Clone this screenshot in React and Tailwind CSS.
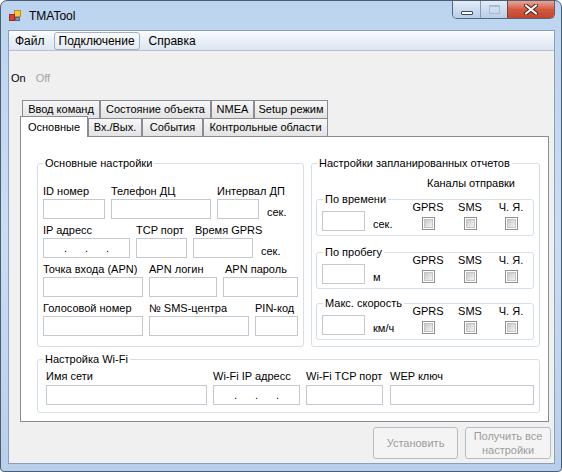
import React from "react";

const BOX = "border border-[#c5c9cf] bg-white";

function Label({ children, className = "" }) {
  return <div className={`h-[13px] whitespace-nowrap leading-[13px] ${className}`}>{children}</div>;
}

function IpDots() {
  return (
    <div className="flex pl-[20px] leading-[18px]">
      <span className="w-[21px]">.</span>
      <span className="w-[21px]">.</span>
      <span className="w-[21px]">.</span>
    </div>
  );
}

function Field({ label, w, labelClass = "", gap = "mt-[1px]", children }) {
  return (
    <div className={`flex ${w} shrink-0 flex-col`}>
      <Label className={labelClass}>{label}</Label>
      <div className={`${gap} h-[20px] w-full ${BOX}`}>{children}</div>
    </div>
  );
}

function Unit({ children, className = "ml-[2px]" }) {
  return <span className={`self-end whitespace-nowrap leading-[13px] ${className}`}>{children}</span>;
}

function GroupTitle({ children, className = "ml-[5px]" }) {
  return (
    <span className={`-mt-[8px] self-start whitespace-nowrap bg-white px-[2px] leading-[14px] ${className}`}>
      {children}
    </span>
  );
}

function Check() {
  return (
    <div className="h-[13px] w-[13px] border border-[#8e8f8f] bg-white p-[1px]">
      <div className="h-full w-full border border-[#c4c4c4] bg-gradient-to-br from-[#c9c9c9] to-[#f3f3f3]" />
    </div>
  );
}

function CheckCol({ label, w }) {
  return (
    <div className={`mt-[1px] flex ${w} flex-col items-center`}>
      <Label>{label}</Label>
      <div className="mt-[3px]">
        <Check />
      </div>
    </div>
  );
}

function ReportGroup({ title, unit, className }) {
  return (
    <div className={`ml-[4px] flex h-[37px] w-[218px] rounded-[3px] border border-[#d5dfe5] ${className}`}>
      <div className="flex w-[91px] flex-col">
        <GroupTitle className="ml-[6px]">{title}</GroupTitle>
        <div className="mt-[5px] flex">
          <div className={`ml-[5px] h-[20px] w-[43px] ${BOX}`} />
          <Unit className="ml-[8px]">{unit}</Unit>
        </div>
      </div>
      <CheckCol label="GPRS" w="w-[40px]" />
      <CheckCol label="SMS" w="w-[44px]" />
      <CheckCol label="Ч. Я." w="w-[38px]" />
    </div>
  );
}

function Tab({ children, w, active = false }) {
  if (active) {
    return (
      <div
        className={`relative z-10 -mt-[2px] flex h-[21px] ${w} items-center justify-center border border-b-0 border-[#898c95] bg-white`}
      >
        {children}
      </div>
    );
  }
  return (
    <div
      className={`flex h-[18px] ${w} items-center justify-center border border-b-0 border-[#898c95] bg-gradient-to-b from-[#f7f7f7] to-[#e3e3e3]`}
    >
      {children}
    </div>
  );
}

function WindowButtons() {
  return (
    <div className="ml-auto mr-[6px] flex h-[18px] self-start overflow-hidden rounded-b-[5px] border border-t-0 border-[#56667a]">
      <div className="flex w-[28px] items-end justify-center border-r border-[#8799b0] bg-gradient-to-b from-[#e3ecf7] to-[#b9cde7] pb-[3px]">
        <div className="h-[4px] w-[12px] rounded-[1px] border border-[#3b4a5c] bg-white" />
      </div>
      <div className="flex w-[27px] items-center justify-center border-r border-[#8a3a2e] bg-gradient-to-b from-[#e3ecf7] to-[#b9cde7]">
        <div className="h-[9px] w-[11px] border border-t-2 border-[#a9bbd1]" />
      </div>
      <div className="flex w-[46px] items-center justify-center bg-gradient-to-b from-[#e9a696] via-[#d25a42] to-[#c4432b]">
        <svg width="14" height="11" viewBox="0 0 14 11">
          <path d="M2 1.5 L12 9.5 M12 1.5 L2 9.5" stroke="#4a2018" strokeWidth="4" strokeLinecap="round" />
          <path d="M2 1.5 L12 9.5 M12 1.5 L2 9.5" stroke="#ffffff" strokeWidth="2.2" strokeLinecap="round" />
        </svg>
      </div>
    </div>
  );
}

export default function App() {
  return (
    <div className="h-[472px] w-[562px] overflow-hidden rounded-t-[7px] rounded-b-[4px] border border-[#4b5d73] bg-gradient-to-b from-[#bcd4ef] via-[#cadef3] to-[#b8cfeb] font-['Liberation_Sans',Arial,sans-serif] text-[11px] text-black">
      {/* title bar */}
      <div className="flex h-[29px] items-center">
        <svg className="ml-[8px]" width="12" height="12" viewBox="0 0 12 12">
          <rect x="5.5" y="0.5" width="6" height="6" fill="#f5c63a" stroke="#c28d1a" />
          <rect x="0.5" y="4.5" width="5" height="6" fill="#d9432e" stroke="#a52a1a" />
          <rect x="6.5" y="7.5" width="4" height="3" fill="#6f95c8" stroke="#47689a" />
        </svg>
        <span className="ml-[8px] text-[12px] leading-[14px]">TMATool</span>
        <WindowButtons />
      </div>

      {/* client area */}
      <div className="ml-[7px] flex h-[434px] w-[547px] flex-col border border-[#8a9fb9] bg-[#f0f0f0]">
        {/* menu */}
        <div className="flex h-[20px] items-center gap-[4px] border-b border-[#b7c0cc] bg-gradient-to-b from-[#fbfcfe] via-[#eaf0f8] to-[#dde6f2] pl-[1px] text-[12px]">
          <div className="h-[18px] rounded-[3px] border border-transparent px-[4px] leading-[16px]">Файл</div>
          <div className="h-[18px] rounded-[3px] border border-[#a3b0c2] bg-gradient-to-b from-[#fafbfd] to-[#e6ebf2] px-[4px] leading-[16px]">
            Подключение
          </div>
          <div className="h-[18px] rounded-[3px] border border-transparent px-[4px] leading-[16px]">Справка</div>
        </div>

        <div className="mt-[20px] flex gap-[10px] pl-[2px] leading-[14px]">
          <span>On</span>
          <span className="text-[#a3a3a3]">Off</span>
        </div>

        {/* tab control */}
        <div className="ml-[11px] mt-[15px] w-[529px]">
          <div className="ml-[2px] flex">
            <Tab w="w-[78px]">Ввод команд</Tab>
            <Tab w="w-[111px]">Состояние объекта</Tab>
            <Tab w="w-[43px]">NMEA</Tab>
            <Tab w="w-[74px]">Setup режим</Tab>
          </div>
          <div className="flex h-[18px]">
            <Tab w="w-[68px]" active>
              Основные
            </Tab>
            <Tab w="w-[54px]">Вх./Вых.</Tab>
            <Tab w="w-[61px]">События</Tab>
            <Tab w="w-[125px]">Контрольные области</Tab>
          </div>

          <div className="h-[286px] border border-[#898c95] bg-white pl-[16px]">
            <div className="mt-[26px] flex gap-[7px]">
              {/* main settings */}
              <div className="flex h-[184px] w-[267px] flex-col rounded-[3px] border border-[#d5dfe5]">
                <GroupTitle>Основные настройки</GroupTitle>
                <div className="ml-[5px] mt-[15px] flex gap-[6px]">
                  <Field label="ID номер" w="w-[62px]" />
                  <Field label="Телефон ДЦ" w="w-[100px]" />
                  <Field label="Интервал ДП" w="w-[42px]" />
                  <Unit>сек.</Unit>
                </div>
                <div className="ml-[5px] mt-[5px] flex gap-[6px]">
                  <Field label="IP адресс" w="w-[87px]">
                    <IpDots />
                  </Field>
                  <Field label="TCP порт" w="w-[51px]" />
                  <Field label="Время GPRS" labelClass="pl-[2px]" w="w-[60px]" />
                  <Unit>сек.</Unit>
                </div>
                <div className="ml-[5px] mt-[5px] flex gap-[6px]">
                  <Field label="Точка входа (APN)" w="w-[100px]" />
                  <Field label="APN логин" w="w-[68px]" />
                  <Field label="APN пароль" labelClass="pl-[2px]" w="w-[75px]" />
                </div>
                <div className="ml-[5px] mt-[5px] flex gap-[6px]">
                  <Field label="Голосовой номер" w="w-[100px]" />
                  <Field label="№ SMS-центра" w="w-[100px]" />
                  <Field label="PIN-код" w="w-[43px]" />
                </div>
              </div>

              {/* scheduled reports */}
              <div className="flex h-[184px] w-[229px] flex-col rounded-[3px] border border-[#d5dfe5]">
                <GroupTitle>Настройки запланированных отчетов</GroupTitle>
                <Label className="ml-[115px] mt-[7px]">Каналы отправки</Label>
                <ReportGroup title="По времени" unit="сек." className="mt-[9px]" />
                <ReportGroup title="По пробегу" unit="м" className="mt-[16px]" />
                <ReportGroup title="Макс. скорость" unit="км/ч" className="mt-[14px]" />
              </div>
            </div>

            {/* wi-fi */}
            <div className="mt-[12px] flex h-[54px] w-[503px] flex-col rounded-[3px] border border-[#d5dfe5]">
              <GroupTitle>Настройка Wi-Fi</GroupTitle>
              <div className="ml-[8px] mt-[4px] flex gap-[6px]">
                <Field label="Имя сети" w="w-[161px]" gap="mt-[2px]" />
                <Field label="Wi-Fi IP адресс" w="w-[87px]" gap="mt-[2px]">
                  <IpDots />
                </Field>
                <Field label="Wi-Fi TCP порт" w="w-[77px]" gap="mt-[2px]" />
                <div className="ml-[1px]">
                  <Field label="WEP ключ" w="w-[144px]" gap="mt-[2px]" />
                </div>
              </div>
            </div>
          </div>
        </div>

        {/* buttons */}
        <div className="ml-[364px] mt-[5px] flex gap-[7px]">
          <button className="h-[32px] w-[85px] rounded-[3px] border border-[#b8bcc0] bg-[#f4f4f4] leading-[14px] text-[#9c9c9c]">
            Установить
          </button>
          <button className="h-[32px] w-[86px] rounded-[3px] border border-[#b8bcc0] bg-[#f4f4f4] leading-[14px] text-[#9c9c9c]">
            Получить все
            <br />
            настройки
          </button>
        </div>
      </div>
    </div>
  );
}
